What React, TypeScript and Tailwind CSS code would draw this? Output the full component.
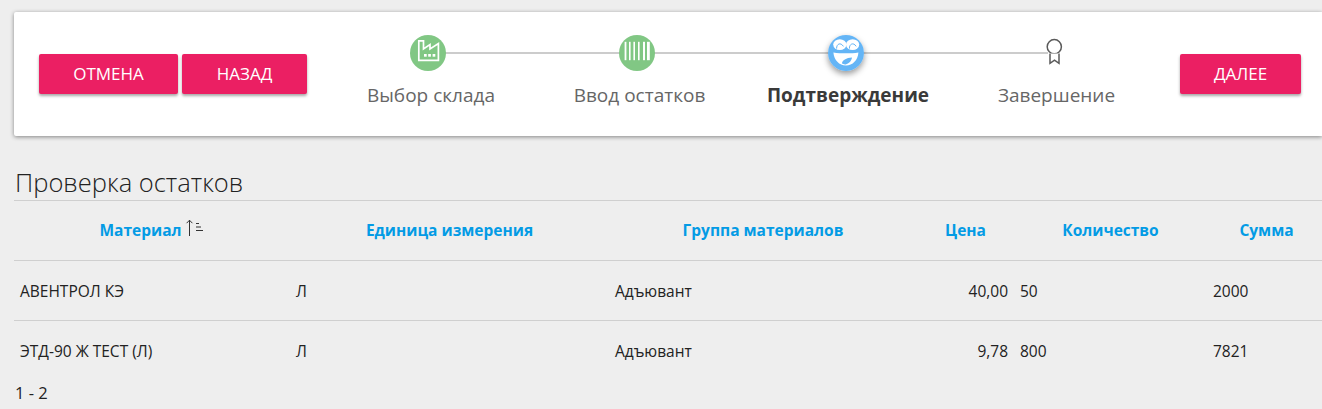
import React from "react";

function FactoryIcon() {
  return (
    <svg width="36" height="36" viewBox="0 0 36 36" className="block">
      <circle cx="18" cy="18" r="18" fill="#81c784" />
      <path d="M8.8 5.8H13.5V14L20 9.6V14L28.4 8.6V25.4H8.8Z" fill="none" stroke="#fff" strokeWidth="1.7" />
      <rect x="14" y="19" width="2.7" height="2.7" fill="#fff" />
      <rect x="18.2" y="19" width="2.7" height="2.7" fill="#fff" />
      <rect x="22.6" y="19" width="2.7" height="2.7" fill="#fff" />
    </svg>
  );
}

function BarcodeIcon() {
  return (
    <svg width="36" height="36" viewBox="0 0 36 36" className="block">
      <circle cx="18" cy="18" r="18" fill="#81c784" />
      <g fill="#fff">
        <rect x="5.6" y="6.8" width="1.8" height="18.4" />
        <rect x="10" y="6.8" width="1.6" height="18.4" />
        <rect x="14.4" y="6.8" width="1.6" height="18.4" />
        <rect x="19" y="6.8" width="1.6" height="18.4" />
        <rect x="24" y="6.8" width="2" height="18.4" />
        <rect x="28" y="6.8" width="2.8" height="18.4" />
      </g>
    </svg>
  );
}

function FaceIcon() {
  return (
    <svg width="36" height="36" viewBox="0 0 36 36" className="block">
      <circle cx="18" cy="18" r="18" fill="#64b5f6" />
      <ellipse cx="11.8" cy="9.6" rx="6.6" ry="5.4" fill="#fff" />
      <ellipse cx="24.6" cy="9.6" rx="6.6" ry="5.4" fill="#fff" />
      <path d="M8.6 13.6C8.4 9 12.6 6.8 15.4 11.4" fill="none" stroke="#64b5f6" strokeWidth="1" />
      <path d="M21.4 13.6C21.2 9 25.4 6.8 28.2 11.4" fill="none" stroke="#64b5f6" strokeWidth="1" />
      <path d="M5.4 17.4C13 18.6 23 18.6 30.4 17.4C30 25 24.6 30.4 18 30.4C11.2 30.4 6 25 5.4 17.4Z" fill="#fff" />
      <path d="M14 28.6C14 25.4 18.4 22.8 24 22.6C23.6 25.6 21 29.2 17.6 29.4C16 29.5 14.8 29.2 14 28.6Z" fill="#64b5f6" />
    </svg>
  );
}

function AwardIcon() {
  return (
    <svg width="36" height="36" viewBox="0 0 36 36" className="block">
      <circle cx="20.3" cy="11.7" r="7.1" fill="#fff" stroke="#5a5a5a" strokeWidth="1.5" />
      <path d="M16 18.4V28.4L20.5 25.2L25 28.4V18.4" fill="#fff" stroke="#5a5a5a" strokeWidth="1.5" />
    </svg>
  );
}

function SortIcon() {
  return (
    <svg width="20" height="18" viewBox="0 0 20 18" className="absolute left-[3px] top-[-17px]">
      <path d="M4.5 17V1.2M1.6 4.2L4.5 1.2L7.4 4.2" fill="none" stroke="#333" strokeWidth="1" />
      <path d="M11 4.5H14M11 8H16M11 11.5H18" fill="none" stroke="#333" strokeWidth="1" />
    </svg>
  );
}

function Btn({ children, className }: { children: React.ReactNode; className: string }) {
  return (
    <button
      className={
        "h-10 rounded-[2px] bg-[#eb1f63] text-[17px] text-white shadow-[0_2px_3px_rgba(0,0,0,0.35)] " + className
      }
    >
      {children}
    </button>
  );
}

const steps = [
  { label: "Выбор склада", icon: <FactoryIcon />, active: false, pad: "pl-[6px]" },
  { label: "Ввод остатков", icon: <BarcodeIcon />, active: false, pad: "pl-[5px]" },
  { label: "Подтверждение", icon: <FaceIcon />, active: true, pad: "pl-[4px]" },
  { label: "Завершение", icon: <AwardIcon />, active: false, pad: "pl-[9px]" },
];

const headers = ["Материал", "Единица измерения", "Группа материалов", "Цена", "Количество", "Сумма"];
const rows = [
  ["АВЕНТРОЛ КЭ", "Л", "Адъювант", "40,00", "50", "2000"],
  ["ЭТД-90 Ж ТЕСТ (Л)", "Л", "Адъювант", "9,78", "800", "7821"],
];

export default function App() {
  return (
    <div className="h-[409px] w-[1322px] overflow-hidden bg-[#eeeeee] pl-[14px] pt-[12px] font-['Open_Sans','Noto_Sans',sans-serif] text-[#222]">
      <div className="flex h-[124px] items-start rounded-l-[2px] bg-white pl-[25px] shadow-[0_1px_4px_rgba(0,0,0,0.45)]">
        <div className="mt-[42px] flex gap-1">
          <Btn className="w-[139px]">ОТМЕНА</Btn>
          <Btn className="w-[125px]">НАЗАД</Btn>
        </div>
        <div className="relative ml-[17px] grid w-[832px] grid-cols-[208px_210px_208px_204px] pt-[23px]">
          <div className="absolute left-[104px] top-[40px] h-[2px] w-[620px] bg-[#cccccc]" />
          {steps.map((s) => (
            <div key={s.label} className="relative flex flex-col items-center">
              <div className={s.active ? "rounded-full shadow-[0_3px_6px_rgba(0,0,0,0.4)]" : ""}>{s.icon}</div>
              <div
                className={
                  "mt-[11px] text-[19px] leading-[26px] whitespace-nowrap " +
                  s.pad +
                  " " +
                  (s.active ? "font-bold text-[#3a3a3a]" : "text-[#666666]")
                }
              >
                {s.label}
              </div>
            </div>
          ))}
        </div>
        <Btn className="ml-[24px] mt-[42px] w-[121px]">ДАЛЕЕ</Btn>
      </div>

      <h1 className="mt-[29px] h-[35px] pl-px text-[25.5px] leading-[35px] font-light text-[#222]">Проверка остатков</h1>

      <table className="w-[1312px] table-fixed border-collapse text-[15.5px]">
        <colgroup>
          <col className="w-[276px]" />
          <col className="w-[319px]" />
          <col className="w-[308px]" />
          <col className="w-[97px]" />
          <col className="w-[193px]" />
          <col className="w-[119px]" />
        </colgroup>
        <thead>
          <tr className="h-[60px] border-y border-[#cfcfcf]">
            {headers.map((h, i) => (
              <th key={h} className="text-center align-middle font-bold text-[#039be5]">
                {h}
                {i === 0 && (
                  <span className="relative inline-block w-[23px]">
                    <SortIcon />
                  </span>
                )}
              </th>
            ))}
          </tr>
        </thead>
        <tbody>
          {rows.map((r) => (
            <tr key={r[0]} className="h-[60px] border-b border-[#cfcfcf] last:border-b-0">
              {r.map((c, i) => (
                <td key={i} className={"px-[6px] pt-[2px] align-middle " + (i === 3 ? "text-right" : "text-left")}>
                  {c}
                </td>
              ))}
            </tr>
          ))}
        </tbody>
      </table>
      <div className="mt-px pl-px text-[16.5px] leading-[22px]">1 - 2</div>
    </div>
  );
}
